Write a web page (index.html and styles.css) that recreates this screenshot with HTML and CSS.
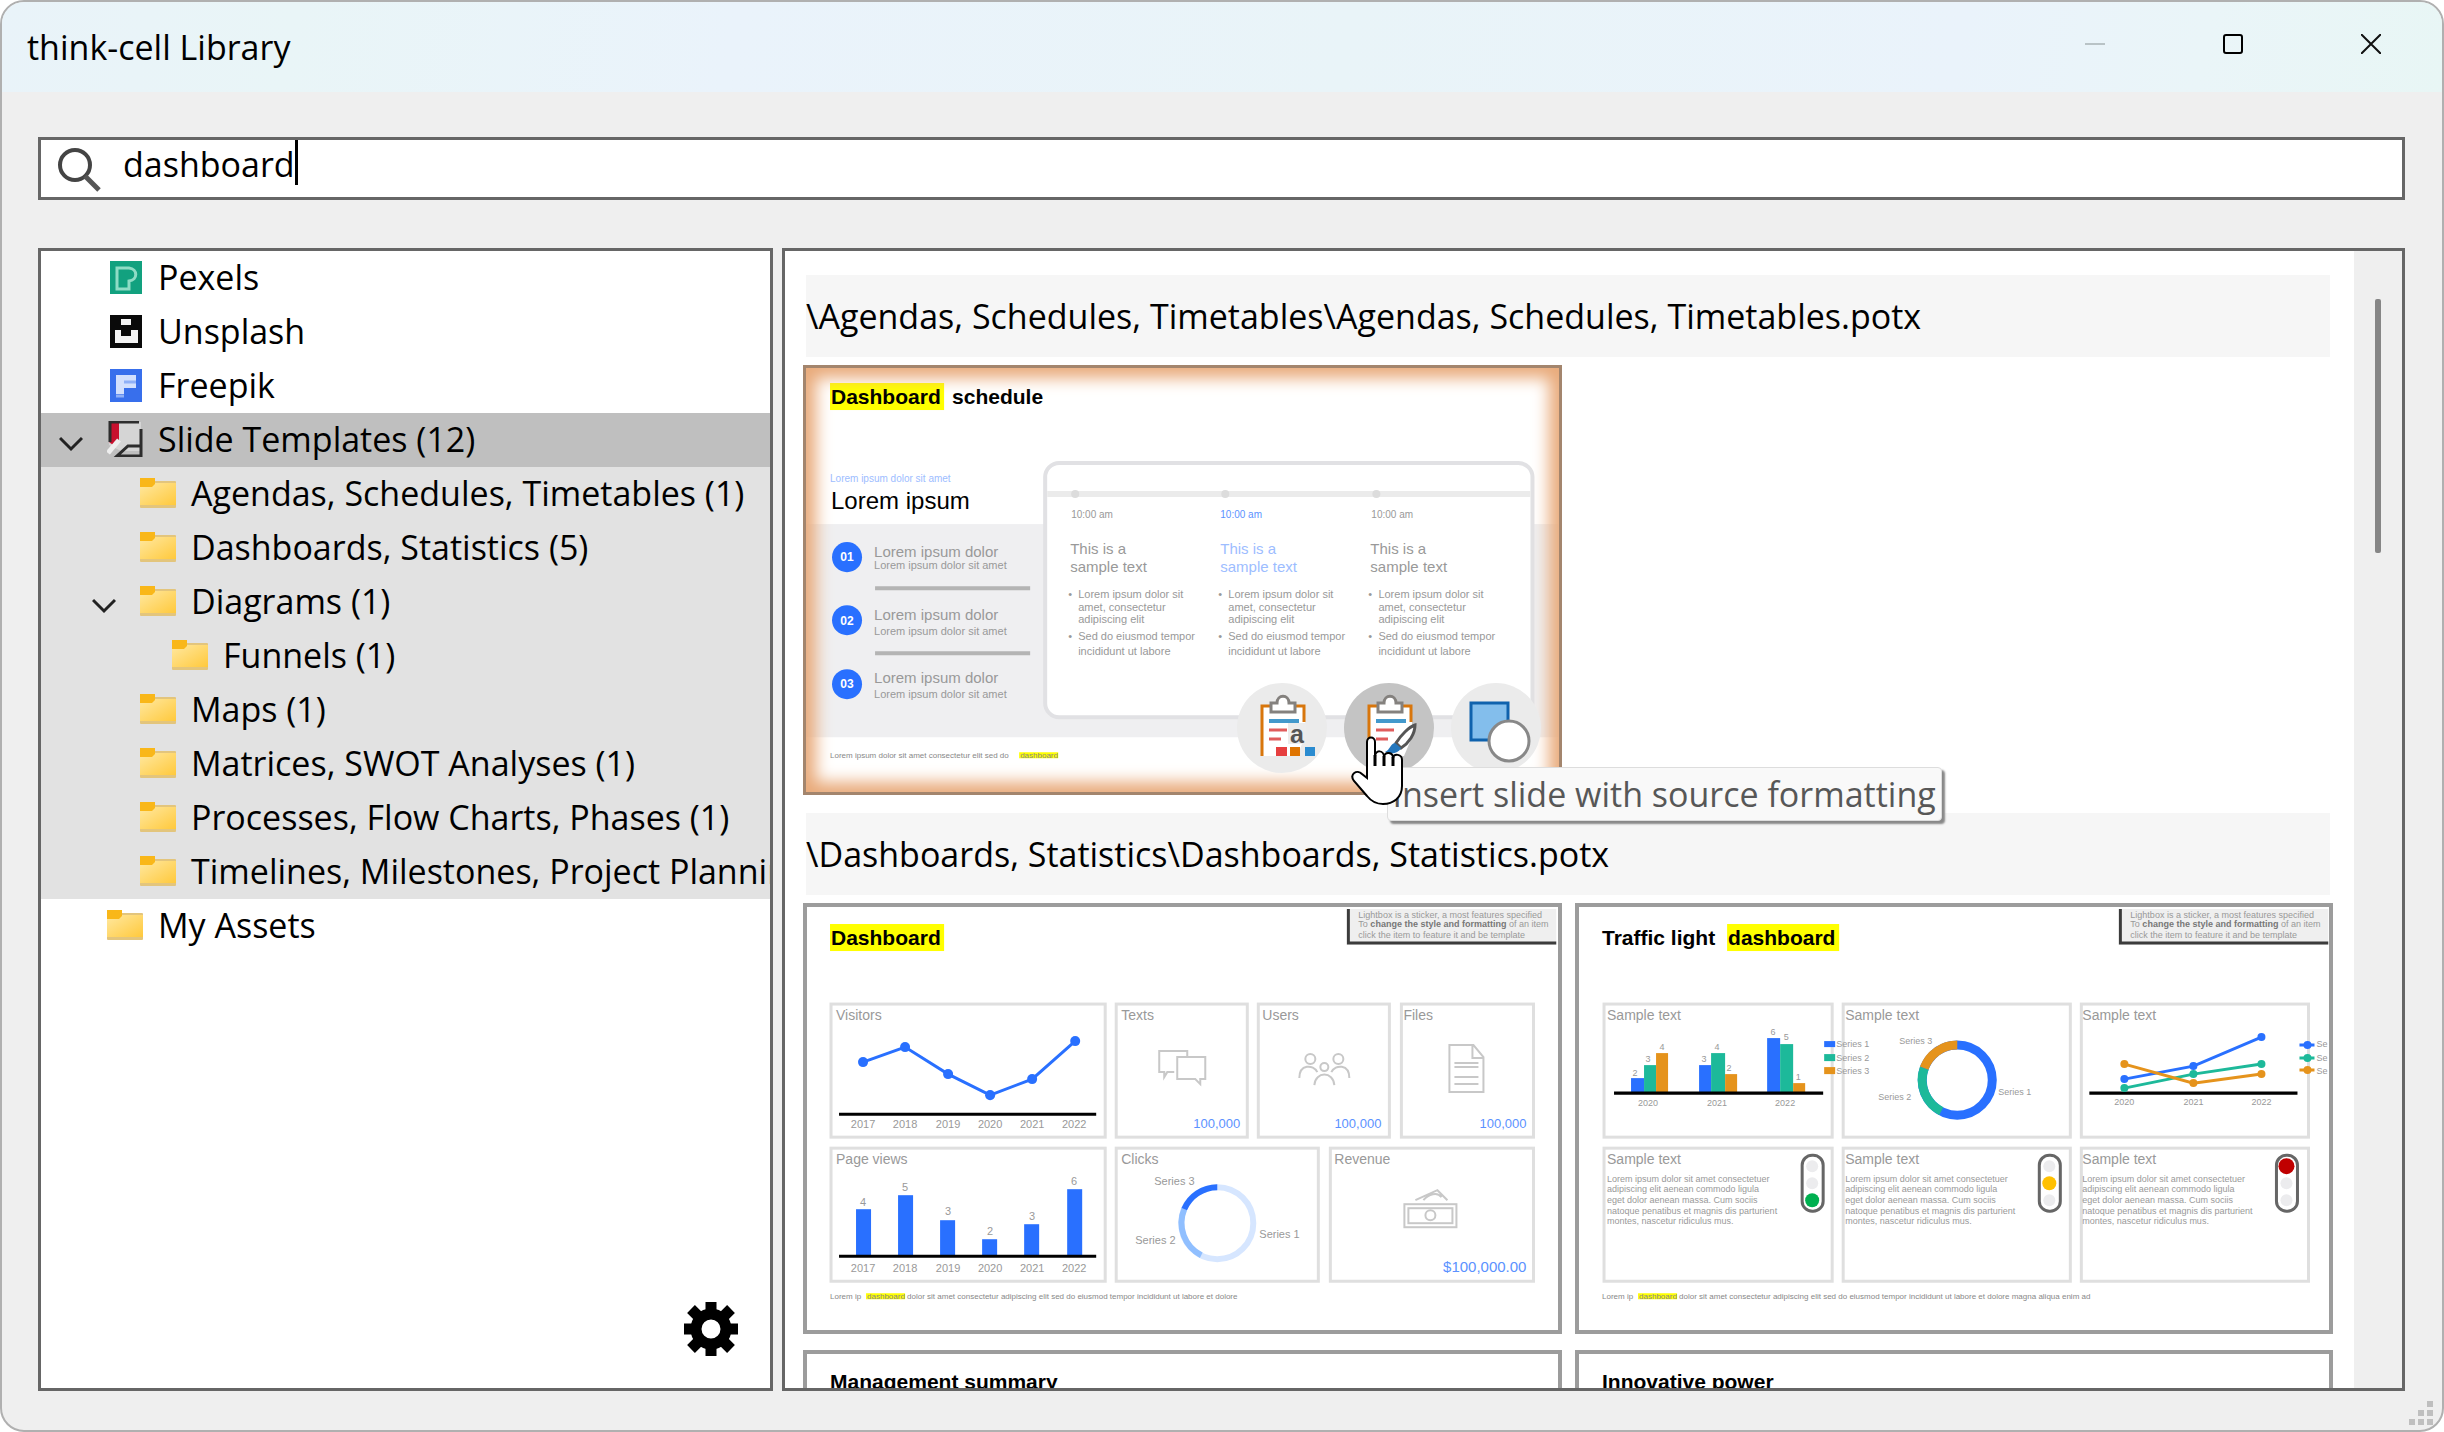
FILE: index.html
```html
<!DOCTYPE html>
<html lang="en">
<head>
<meta charset="utf-8">
<title>think-cell Library</title>
<link rel="stylesheet" href="styles.css">
</head>
<body>
<svg class="defs" aria-hidden="true">
  <defs>
    <linearGradient id="folder-fill" x1="0" y1="0" x2="1" y2="1"><stop offset="0" stop-color="#ffe8a0"/><stop offset="1" stop-color="#ffc93c"/></linearGradient>
    <symbol id="folder" viewBox="0 0 36 30">
      <rect y="3" width="36" height="27" rx="1" fill="#e3c57c"/>
      <rect y="5" width="36" height="22" fill="url(#folder-fill)"/>
      <path d="M0 0h15v6l-3 3H0z" fill="#f9b719"/>
    </symbol>
    <symbol id="chevron" viewBox="0 0 24 16"><path d="M1 2l11 11L23 2" fill="none" stroke="#222" stroke-width="3"/></symbol>
    <symbol id="board" viewBox="0 0 90 90">
      <path d="M24 22h44v32l-8 19H24z" fill="#fff"/>
      <path d="M25 73V23h42v16" fill="none" stroke="#d8760c" stroke-width="3"/>
      <path d="M34 20h6c0-9 12-9 12 0h6v9H34z" fill="#fff" stroke="#84817e" stroke-width="3"/>
      <path d="M32 38h30" stroke="#4399cc" stroke-width="4"/>
      <path d="M32 47h18M32 56h12" stroke="#e05c5c" stroke-width="3"/>
    </symbol>
    <symbol id="note" viewBox="0 0 210 36">
      <path d="M0 0h210v36H0z" fill="#efefef"/>
      <path d="M2 0v34h208" fill="none" stroke="#3c3c3c" stroke-width="3"/>
      <g class="note-text">
        <text x="12" y="9">Lightbox is a sticker, a most features specified</text>
        <text x="12" y="18">To <tspan class="strong">change the style and formatting</tspan> of an item</text>
        <text x="12" y="29">click the item to feature it and be template</text>
      </g>
    </symbol>
  </defs>
</svg>

<div class="window">
  <header class="titlebar">
    <h1 class="title">think-cell Library</h1>
    <button class="win-btn" aria-label="Minimize" disabled><svg width="20" height="20"><path d="M0 10h20" stroke="#b9c3c6" stroke-width="2"/></svg></button>
    <button class="win-btn" aria-label="Maximize"><svg width="20" height="20"><rect x="1" y="1" width="18" height="18" rx="2" fill="none" stroke="#000" stroke-width="2"/></svg></button>
    <button class="win-btn" aria-label="Close"><svg width="20" height="20"><path d="M0 0l20 20M20 0L0 20" stroke="#111" stroke-width="2"/></svg></button>
  </header>

  <main class="body">
    <div class="search">
      <label for="q" aria-label="Search"><svg class="lens" width="44" height="46" viewBox="0 0 44 46"><circle cx="18" cy="18" r="15" fill="none" stroke="#444" stroke-width="4"/><path d="M28 29l14 14" stroke="#555" stroke-width="5"/></svg></label>
      <input id="q" type="text" value="dashboard"><span class="caret"></span>
    </div>

    <div class="panels">
      <nav class="sidebar">
        <ul class="tree">
          <li><button class="row"><span class="twisty"></span><svg class="ico" viewBox="0 0 36 36"><rect x="3" y="2" width="32" height="33" fill="#12a17f"/><path d="M10 9h12c9 1 9 12 0 13v8H10z" fill="none" stroke="#8fdcc5" stroke-width="3"/></svg><span>Pexels</span></button></li>
          <li><button class="row"><span class="twisty"></span><svg class="ico" viewBox="0 0 36 36"><rect x="3" y="2" width="32" height="33" fill="#0a0a0a"/><path d="M14 6h10v6H14zM8 17h6v6h10v-6h7v13H8z" fill="#f4f4f4"/></svg><span>Unsplash</span></button></li>
          <li><button class="row"><span class="twisty"></span><svg class="ico" viewBox="0 0 36 36"><rect x="3" y="2" width="32" height="33" fill="#386fec"/><path d="M9 8h20v13H17v6H9z" fill="#d3e0fd"/><path d="M17 15h12M9 29h8" stroke="#8fb0f7" stroke-width="3"/></svg><span>Freepik</span></button></li>
          <li>
            <button class="row selected"><span class="twisty"><svg width="24" height="16"><use href="#chevron"/></svg></span><svg class="ico" viewBox="0 0 36 36"><path d="M4 1h30v29H14L2 24z" fill="#d5d5d5"/><path d="M2 2h10v17l-6 5-4-3z" fill="#c8102e"/><path d="M3 21V1h29M34 8v27H10l11-10h13" fill="none" stroke="#2d2d2d" stroke-width="3"/><path d="M12 19l-11 13" stroke="#eee" stroke-width="5"/></svg><span>Slide Templates (12)</span></button>
            <ul class="branch">
              <li><button class="row l2"><span class="twisty"></span><svg class="ico folder"><use href="#folder"/></svg><span>Agendas, Schedules, Timetables (1)</span></button></li>
              <li><button class="row l2"><span class="twisty"></span><svg class="ico folder"><use href="#folder"/></svg><span>Dashboards, Statistics (5)</span></button></li>
              <li><button class="row l2"><span class="twisty"><svg width="24" height="16"><use href="#chevron"/></svg></span><svg class="ico folder"><use href="#folder"/></svg><span>Diagrams (1)</span></button>
                <ul><li><button class="row l3"><span class="twisty"></span><svg class="ico folder"><use href="#folder"/></svg><span>Funnels (1)</span></button></li></ul>
              </li>
              <li><button class="row l2"><span class="twisty"></span><svg class="ico folder"><use href="#folder"/></svg><span>Maps (1)</span></button></li>
              <li><button class="row l2"><span class="twisty"></span><svg class="ico folder"><use href="#folder"/></svg><span>Matrices, SWOT Analyses (1)</span></button></li>
              <li><button class="row l2"><span class="twisty"></span><svg class="ico folder"><use href="#folder"/></svg><span>Processes, Flow Charts, Phases (1)</span></button></li>
              <li><button class="row l2"><span class="twisty"></span><svg class="ico folder"><use href="#folder"/></svg><span>Timelines, Milestones, Project Planning (1)</span></button></li>
            </ul>
          </li>
          <li><button class="row"><span class="twisty"></span><svg class="ico folder"><use href="#folder"/></svg><span>My Assets</span></button></li>
        </ul>
        <button class="gear" aria-label="Settings"><svg width="56" height="56" viewBox="-28 -28 56 56"><g stroke="#000" stroke-width="11"><path d="M0-27V-14M0 27V14M-27 0H-14M27 0H14M-20-20l9 9M20-20l-9 9M-20 20l9-9M20 20l-9-9"/></g><circle r="15" fill="none" stroke="#000" stroke-width="11"/></svg></button>
      </nav>

      <section class="results">
        <div class="content">
          <h2 class="path">\Agendas, Schedules, Timetables\Agendas, Schedules, Timetables.potx</h2>
          <div class="grid">
            <article class="thumb active">
              <svg class="slide" viewBox="0 0 758 430">
                <rect x="27" y="18" width="114" height="27" fill="#ff0"/>
                <text class="s-title" x="28" y="39">Dashboard</text><text class="s-title" x="149" y="39">schedule</text>
                <rect x="3" y="159" width="752" height="213" fill="#efeff1"/>
                <rect x="242" y="98" width="487" height="254" rx="14" fill="#fff" stroke="#e1e1e4" stroke-width="4"/>
                <path d="M244 129h483" stroke="#ebebeb" stroke-width="6"/>
                <g fill="#dcdcdc"><circle cx="272" cy="129" r="4"/><circle cx="422" cy="129" r="4"/><circle cx="573" cy="129" r="4"/></g>
                <text class="f10 blue2" x="27" y="117">Lorem ipsum dolor sit amet</text>
                <text class="f24" x="28" y="144">Lorem ipsum</text>
                <g fill="#2970ff"><circle cx="44" cy="192" r="15"/><circle cx="44" cy="255" r="15"/><circle cx="44" cy="319" r="15"/></g>
                <g class="num"><text x="44" y="196">01</text><text x="44" y="260">02</text><text x="44" y="323">03</text></g>
                <g class="f15"><text x="71" y="192">Lorem ipsum dolor</text><text x="71" y="255">Lorem ipsum dolor</text><text x="71" y="318">Lorem ipsum dolor</text></g>
                <g class="f11"><text x="71" y="204">Lorem ipsum dolor sit amet</text><text x="71" y="270">Lorem ipsum dolor sit amet</text><text x="71" y="333">Lorem ipsum dolor sit amet</text></g>
                <path d="M72 223h155M72 288h155" stroke="#b4b4b4" stroke-width="4"/>
                <g class="f10"><text x="268" y="153">10:00 am</text><text class="blue" x="417" y="153">10:00 am</text><text x="568" y="153">10:00 am</text></g>
                <g class="f15"><text x="267" y="189">This is a</text><text x="267" y="207">sample text</text><text class="blue2" x="417" y="189">This is a</text><text class="blue2" x="417" y="207">sample text</text><text x="567" y="189">This is a</text><text x="567" y="207">sample text</text></g>
                <g class="f11">
                  <text x="265" y="233">•</text><text x="275" y="233">Lorem ipsum dolor sit</text><text x="275" y="246">amet, consectetur</text><text x="275" y="258">adipiscing elit</text><text x="265" y="275">•</text><text x="275" y="275">Sed do eiusmod tempor</text><text x="275" y="290">incididunt ut labore</text>
                  <text x="415" y="233">•</text><text x="425" y="233">Lorem ipsum dolor sit</text><text x="425" y="246">amet, consectetur</text><text x="425" y="258">adipiscing elit</text><text x="415" y="275">•</text><text x="425" y="275">Sed do eiusmod tempor</text><text x="425" y="290">incididunt ut labore</text>
                  <text x="565" y="233">•</text><text x="575" y="233">Lorem ipsum dolor sit</text><text x="575" y="246">amet, consectetur</text><text x="575" y="258">adipiscing elit</text><text x="565" y="275">•</text><text x="575" y="275">Sed do eiusmod tempor</text><text x="575" y="290">incididunt ut labore</text>
                </g>
                <rect x="216" y="387" width="39" height="6" fill="#ff0"/>
                <g class="foot"><text x="27" y="393">Lorem ipsum dolor sit amet consectetur elit sed do</text><text x="217" y="393">dashboard</text></g>
              </svg>
              <div class="actions">
                <button class="act" aria-label="Insert slide with destination formatting"><svg width="90" height="90"><use href="#board"/><rect x="51" y="40" width="18" height="21" fill="#ececec"/><text class="letter" x="53" y="60">a</text><rect x="39" y="64" width="11" height="9" fill="#e63f3f"/><rect x="53" y="64" width="10" height="9" fill="#df7400"/><rect x="68" y="64" width="10" height="9" fill="#2a8bd0"/></svg></button>
                <div class="act-wrap">
                  <button class="act hover" aria-describedby="tip"><svg width="90" height="90"><use href="#board"/><path d="M71 42c-6 2-14 10-19 18l5 5c8-5 14-14 14-23z" fill="#fff" stroke="#555" stroke-width="3"/><path d="M51 60l6 5c-3 6-10 6-16 4 5-2 5-8 10-9z" fill="#2477bd"/></svg></button>
                  <div class="tooltip" id="tip" role="tooltip">Insert slide with source formatting</div>
                  <svg class="pointer" width="54" height="72" viewBox="0 0 54 72"><path d="M16 43V7c0-6 8-6 8 0v15c0-8 9-7 9 0 1-6 9-5 9 1 1-5 9-4 9 2v26c0 12-9 18-19 18-8 0-12-3-16-8L3 46c-5-7 3-12 8-7z" fill="#fff" stroke="#000" stroke-width="2"/><path d="M24 20v11M33 21v10M42 22v9" stroke="#000" stroke-width="3"/></svg>
                </div>
                <button class="act" aria-label="Insert shapes"><svg width="90" height="90"><rect x="20" y="20" width="37" height="37" fill="#83beec" stroke="#0f62ad" stroke-width="3"/><circle cx="58" cy="58" r="20" fill="#fff" stroke="#888" stroke-width="3"/></svg></button>
              </div>
            </article>
          </div>

          <h2 class="path">\Dashboards, Statistics\Dashboards, Statistics.potx</h2>
          <div class="grid">
            <article class="thumb">
              <svg class="slide" viewBox="0 0 758 430">
                <rect x="27" y="21" width="114" height="27" fill="#ff0"/>
                <text class="s-title" x="28" y="42">Dashboard</text>
                <use href="#note" x="543" y="6" width="210" height="36"/>
                <g class="card"><rect x="28" y="101" width="274" height="133"/><rect x="313" y="101" width="131" height="133"/><rect x="455" y="101" width="131" height="133"/><rect x="598" y="101" width="132" height="133"/><rect x="28" y="245" width="274" height="133"/><rect x="313" y="245" width="202" height="133"/><rect x="527" y="245" width="203" height="133"/></g>
                <g class="f14"><text x="33" y="117">Visitors</text><text x="318" y="117">Texts</text><text x="459" y="117">Users</text><text x="600" y="117">Files</text><text x="33" y="261">Page views</text><text x="318" y="261">Clicks</text><text x="531" y="261">Revenue</text></g>
                <path d="M60 159L102 144 145 171 187 192 229 176 272 138" fill="none" stroke="#2970ff" stroke-width="3"/>
                <g fill="#2970ff"><circle cx="60" cy="159" r="5"/><circle cx="102" cy="144" r="5"/><circle cx="145" cy="171" r="5"/><circle cx="187" cy="192" r="5"/><circle cx="229" cy="176" r="5"/><circle cx="272" cy="138" r="5"/></g>
                <g class="f11 mid"><text x="60" y="225">2017</text><text x="102" y="225">2018</text><text x="145" y="225">2019</text><text x="187" y="225">2020</text><text x="229" y="225">2021</text><text x="271" y="225">2022</text>
                <text x="60" y="369">2017</text><text x="102" y="369">2018</text><text x="145" y="369">2019</text><text x="187" y="369">2020</text><text x="229" y="369">2021</text><text x="271" y="369">2022</text>
                <text x="60" y="303">4</text><text x="102" y="288">5</text><text x="145" y="312">3</text><text x="187" y="332">2</text><text x="229" y="317">3</text><text x="271" y="282">6</text></g>
                <g fill="#2970ff"><rect x="53" y="306" width="15" height="47"/><rect x="95" y="292" width="15" height="61"/><rect x="137" y="317" width="15" height="36"/><rect x="179" y="336" width="15" height="17"/><rect x="221" y="321" width="15" height="32"/><rect x="264" y="286" width="15" height="67"/></g>
                <path d="M36 211h257M36 353h257" stroke="#000" stroke-width="3"/>
                <g class="f13 end blue"><text x="437" y="225">100,000</text><text x="578" y="225">100,000</text><text x="723" y="225">100,000</text><text class="f15" x="723" y="369">$100,000.00</text></g>
                <g class="glyph"><path d="M371 169h-7l-3 5v-5h-5v-21h28v6M374 154h28v22h-5v5l-5-5h-18z"/>
                <circle cx="507" cy="156" r="5"/><circle cx="535" cy="156" r="5"/><circle cx="521" cy="164" r="4"/><path d="M496 175c0-14 14-14 18-6M546 175c0-14-14-14-18-6M511 182c1-14 19-14 20 0"/>
                <path d="M646 142h24l10 12v35h-34zM669 142v13h11M651 164h24M651 174h24M651 181h24M651 160h24"/>
                <rect x="601" y="301" width="52" height="23"/><rect x="605" y="305" width="44" height="15"/><circle cx="627" cy="312" r="5"/><path d="M612 297l22-10 10 10M620 297c5-6 14-9 18-3"/></g>
                <g fill="none" stroke-width="6"><circle cx="414" cy="320" r="36" stroke="#d6e6ff"/><path d="M381 306A36 36 0 0 0 398 352" stroke="#90bfff"/><path d="M381 306A36 36 0 0 1 414 284" stroke="#2970ff"/></g>
                <g class="f11"><text x="351" y="282">Series 3</text><text x="332" y="341">Series 2</text><text x="456" y="335">Series 1</text></g>
                <rect x="63" y="390" width="39" height="6" fill="#ff0"/>
                <g class="foot"><text x="27" y="396">Lorem ip</text><text x="64" y="396">dashboard</text><text x="104" y="396">dolor sit amet consectetur adipiscing elit sed do eiusmod tempor incididunt ut labore et dolore</text></g>
              </svg>
            </article>
            <article class="thumb">
              <svg class="slide" viewBox="0 0 758 430">
                <rect x="152" y="21" width="112" height="27" fill="#ff0"/>
                <text class="s-title" x="27" y="42">Traffic light</text><text class="s-title" x="153" y="42">dashboard</text>
                <use href="#note" x="543" y="6" width="210" height="36"/>
                <g class="card"><rect x="29" y="101" width="228" height="133"/><rect x="268" y="101" width="227" height="133"/><rect x="506" y="101" width="227" height="133"/><rect x="29" y="245" width="228" height="133"/><rect x="268" y="245" width="227" height="133"/><rect x="506" y="245" width="227" height="133"/></g>
                <g class="f14"><text x="32" y="117">Sample text</text><text x="270" y="117">Sample text</text><text x="507" y="117">Sample text</text><text x="32" y="261">Sample text</text><text x="270" y="261">Sample text</text><text x="507" y="261">Sample text</text></g>
                <g fill="#2970ff"><rect x="56" y="175" width="13" height="15"/><rect x="124" y="162" width="12" height="28"/><rect x="192" y="135" width="13" height="55"/><rect x="249" y="138" width="11" height="6"/></g>
                <g fill="#1db99a"><rect x="69" y="162" width="12" height="28"/><rect x="136" y="150" width="14" height="40"/><rect x="205" y="141" width="13" height="49"/><rect x="249" y="151" width="11" height="7"/></g>
                <g fill="#e5931c"><rect x="81" y="150" width="12" height="40"/><rect x="150" y="171" width="12" height="19"/><rect x="218" y="180" width="12" height="10"/><rect x="249" y="164" width="11" height="7"/></g>
                <path d="M39 190h209M514 190h208" stroke="#000" stroke-width="3"/>
                <g class="f9"><text x="261" y="144">Series 1</text><text x="261" y="158">Series 2</text><text x="261" y="171">Series 3</text><text x="324" y="141">Series 3</text><text x="303" y="197">Series 2</text><text x="423" y="192">Series 1</text></g>
                <g class="f9 mid"><text x="73" y="203">2020</text><text x="142" y="203">2021</text><text x="210" y="203">2022</text><text x="549" y="202">2020</text><text x="618" y="202">2021</text><text x="686" y="202">2022</text>
                <text x="60" y="173">2</text><text x="73" y="159">3</text><text x="87" y="147">4</text><text x="129" y="159">3</text><text x="142" y="147">4</text><text x="154" y="168">2</text><text x="198" y="132">6</text><text x="211" y="137">5</text><text x="223" y="177">1</text></g>
                <g fill="none" stroke-width="9"><circle cx="382" cy="177" r="35" stroke="#2970ff"/><path d="M349 165A35 35 0 0 0 366 208" stroke="#1db99a"/><path d="M349 165A35 35 0 0 1 382 142" stroke="#e5931c"/></g>
                <g fill="none" stroke-width="3"><path d="M549 176L618 163 686 134M724 142h15" stroke="#2970ff"/><path d="M549 185L618 171 686 161M724 155h15" stroke="#1db99a"/><path d="M549 161L618 180 686 171M724 167h15" stroke="#e5931c"/></g>
                <g fill="#2970ff"><circle cx="549" cy="176" r="4"/><circle cx="618" cy="163" r="4"/><circle cx="686" cy="134" r="4"/><circle cx="732" cy="142" r="4"/></g>
                <g fill="#1db99a"><circle cx="549" cy="185" r="4"/><circle cx="618" cy="171" r="4"/><circle cx="686" cy="161" r="4"/><circle cx="732" cy="155" r="4"/></g>
                <g fill="#e5931c"><circle cx="549" cy="161" r="4"/><circle cx="618" cy="180" r="4"/><circle cx="686" cy="171" r="4"/><circle cx="732" cy="167" r="4"/></g>
                <g class="f9"><text x="741" y="144">Se</text><text x="741" y="158">Se</text><text x="741" y="171">Se</text></g>
                <g class="f9">
                  <text x="32" y="279">Lorem ipsum dolor sit amet consectetuer</text><text x="32" y="289">adipiscing elit aenean commodo ligula</text><text x="32" y="300">eget dolor aenean massa. Cum sociis</text><text x="32" y="311">natoque penatibus et magnis dis parturient</text><text x="32" y="321">montes, nascetur ridiculus mus.</text>
                  <text x="270" y="279">Lorem ipsum dolor sit amet consectetuer</text><text x="270" y="289">adipiscing elit aenean commodo ligula</text><text x="270" y="300">eget dolor aenean massa. Cum sociis</text><text x="270" y="311">natoque penatibus et magnis dis parturient</text><text x="270" y="321">montes, nascetur ridiculus mus.</text>
                  <text x="507" y="279">Lorem ipsum dolor sit amet consectetuer</text><text x="507" y="289">adipiscing elit aenean commodo ligula</text><text x="507" y="300">eget dolor aenean massa. Cum sociis</text><text x="507" y="311">natoque penatibus et magnis dis parturient</text><text x="507" y="321">montes, nascetur ridiculus mus.</text>
                </g>
                <g fill="#fff" stroke="#666" stroke-width="3"><rect x="227" y="252" width="21" height="56" rx="10"/><rect x="464" y="252" width="21" height="56" rx="10"/><rect x="701" y="252" width="21" height="56" rx="10"/></g>
                <g fill="#ececee"><circle cx="237" cy="263" r="6"/><circle cx="237" cy="280" r="6"/><circle cx="474" cy="263" r="6"/><circle cx="474" cy="297" r="6"/><circle cx="711" cy="280" r="6"/><circle cx="711" cy="297" r="6"/></g>
                <circle cx="237" cy="297" r="7" fill="#00b050"/><circle cx="474" cy="280" r="7" fill="#ffc000"/><circle cx="711" cy="263" r="8" fill="#c00000"/>
                <rect x="63" y="390" width="39" height="6" fill="#ff0"/>
                <g class="foot"><text x="27" y="396">Lorem ip</text><text x="64" y="396">dashboard</text><text x="104" y="396">dolor sit amet consectetur adipiscing elit sed do eiusmod tempor incididunt ut labore et dolore magna aliqua enim ad</text></g>
              </svg>
            </article>
            <article class="thumb"><svg class="slide" viewBox="0 0 758 430"><text class="s-title" x="27" y="39">Management summary</text></svg></article>
            <article class="thumb"><svg class="slide" viewBox="0 0 758 430"><text class="s-title" x="27" y="39">Innovative power</text></svg></article>
          </div>
        </div>
        <div class="scrollbar"><div class="scroll-thumb"></div></div>
      </section>
    </div>
  </main>
  <svg class="grip" width="24" height="24" viewBox="0 0 24 24" fill="#bfbfbf"><path d="M18 0h6v6h-6zM9 9h6v6H9zM18 9h6v6h-6zM0 18h6v6H0zM9 18h6v6H9zM18 18h6v6h-6z"/></svg>
</div>
</body>
</html>
```
FILE: styles.css
```css
* { box-sizing: border-box; }
body { margin: 0; background: #fff; font: 34px/44px "Open Sans", "Noto Sans", sans-serif; color: #000; }
ul { list-style: none; margin: 0; padding: 0; }
button { font: inherit; color: inherit; border: 0; background: none; padding: 0; }
svg { display: block; flex: none; }
.defs { position: absolute; width: 0; height: 0; }

.window { position: relative; display: flex; flex-direction: column; height: 100vh; border: 2px solid #b0b0b0; border-radius: 24px; background: #efefef; overflow: hidden; }
.titlebar { display: flex; flex: none; height: 90px; padding: 0 2px 0 25px; align-items: stretch; background: linear-gradient(100deg, #e9f3f9, #e9f5f7 12%, #eaf3fb 30%, #e9f4f8 55%, #eaf3fb 80%, #eaf5f8 90%, #e8f6f5); }
.title { margin: 0 auto 0 0; align-self: center; font-size: 34px; font-weight: 400; }
.win-btn { width: 138px; display: flex; align-items: center; justify-content: center; padding-bottom: 6px; }

.body { flex: 1; min-height: 0; display: flex; flex-direction: column; gap: 48px; padding: 45px 37px 39px 36px; }
.search { display: flex; flex: none; height: 63px; align-items: flex-start; border: 3px solid #666; background: #fff; padding-left: 16px; }
.lens { margin: 7px 22px 0 0; }
.search input { field-sizing: content; height: 46px; border: 0; padding: 2px 0 0; outline: 0; background: none; font: inherit; color: inherit; }
.caret { width: 3px; height: 45px; background: #000; }

.panels { flex: 1; min-height: 0; display: grid; grid-template-columns: 735px 1fr; gap: 9px; }
.sidebar, .results { border: 3px solid #666; background: #fff; min-height: 0; overflow: hidden; }
.sidebar { display: flex; flex-direction: column; justify-content: space-between; }
.row { display: flex; align-items: center; width: 100%; height: 54px; padding: 0 0 2px 18px; white-space: nowrap; overflow: hidden; text-align: left; }
.row.l2 { padding-left: 51px; }
.row.l3 { padding-left: 83px; }
.row.selected { background: #bfbfbf; }
.branch { background: #e2e2e2; }
.twisty { flex: none; width: 24px; margin-right: 24px; padding-top: 10px; }
.ico { width: 36px; height: 36px; margin-right: 15px; }
.folder { height: 30px; }
.gear { align-self: flex-end; margin: 0 31px 31px 0; }

.results { display: flex; }
.content { flex: 1; min-width: 0; padding: 24px 21px 0 18px; overflow: hidden; }
.path { margin: 0 3px 8px; height: 82px; line-height: 83px; background: #f6f6f6; font-size: 34px; font-weight: 400; white-space: nowrap; }
.grid { display: grid; grid-template-columns: 1fr 1fr; gap: 16px 13px; margin-bottom: 18px; }
.scrollbar { flex: none; width: 48px; background: #efefef; padding-top: 48px; }
.scroll-thumb { width: 6px; height: 254px; margin-left: 21px; background: #868686; border-radius: 2px; }

.thumb { position: relative; background: #fff; }
.thumb::after { content: ""; position: absolute; inset: 0; border: 4px solid #9c9c9c; pointer-events: none; }
.thumb.active::after { border: 3px solid #a3856d; box-shadow: inset 0 0 16px 10px #e9ab7b; }
.slide { width: 100%; height: auto; font-family: "Liberation Sans", Arial, sans-serif; fill: #999; }
.s-title { font-size: 21px; font-weight: 700; fill: #000; }
.f9 { font-size: 9px; }
.f10 { font-size: 10px; }
.f11 { font-size: 11px; }
.f13 { font-size: 13px; }
.f14 { font-size: 14px; }
.f15 { font-size: 15px; }
.f24 { font-size: 24px; fill: #000; }
.foot { font-size: 8px; fill: #888; }
.blue { fill: #5b92ff; }
.blue2 { fill: #9dbdff; }
.mid { text-anchor: middle; }
.end { text-anchor: end; }
.num { font-size: 12px; font-weight: 700; fill: #fff; text-anchor: middle; }
.card { fill: none; stroke: #dfdfdf; stroke-width: 3px; }
.glyph { fill: none; stroke: #c8c8c8; stroke-width: 2px; }
.note-text { font-size: 9px; fill: #999; }
.strong { font-weight: 700; fill: #777; }
.letter { font: 700 25px "Liberation Sans", Arial, sans-serif; fill: #555; }

.actions { position: absolute; right: 21px; bottom: 22px; z-index: 1; display: flex; gap: 17px; }
.act { display: block; width: 90px; height: 90px; border-radius: 50%; background: #ebebeb; }
.act.hover { background: #c4c4c4; }
.act-wrap { position: relative; z-index: 1; }
.tooltip { position: absolute; left: 43px; top: 84px; padding: 4px 5px; border: 1px solid #ddd; border-radius: 4px; background: #f9f9f9; box-shadow: 3px 3px 2px #888; color: #575757; white-space: nowrap; }
.pointer { position: absolute; left: 7px; top: 52px; }
.grip { position: absolute; right: 9px; bottom: 5px; }
```
